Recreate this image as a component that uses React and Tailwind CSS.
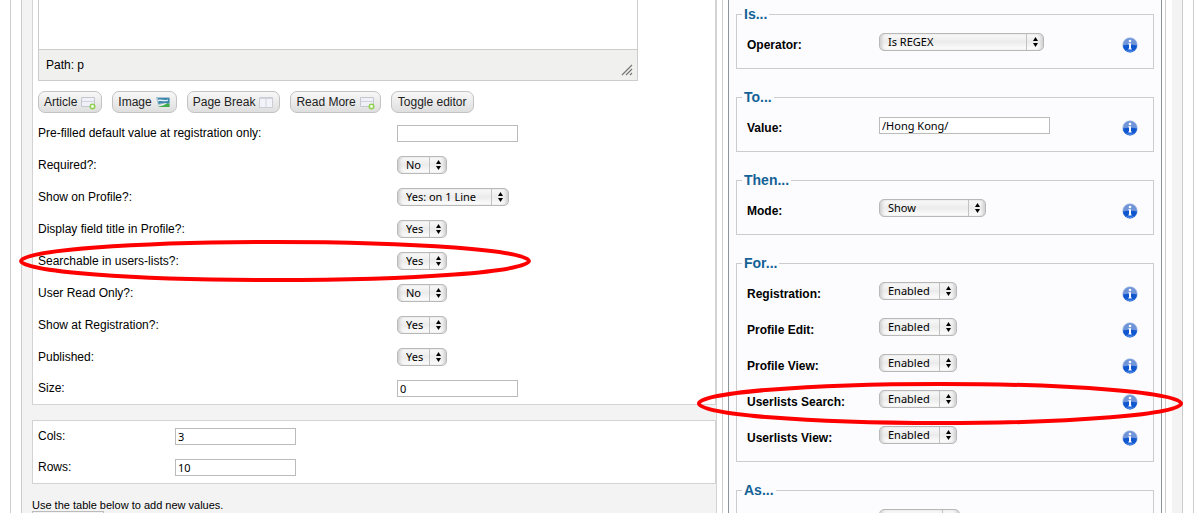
import { useId } from 'react';

const YES_NO = ['Yes', 'No'];
const STATES = ['Enabled', 'Disabled'];

function SelectBox({ id, value, options, width }) {
  return (
    <span className={`relative inline-flex ${width}`}>
      <select
        id={id}
        defaultValue={value}
        className="h-[18px] w-full appearance-none rounded-[5px] border border-[#b8b8b8] bg-linear-to-b from-[#fafafa] via-[#ebebeb] to-white pl-2 pr-[18px] font-['Noto_Sans',sans-serif] text-[11px] leading-4 text-black shadow-[inset_3px_0_3px_-1px_#d0d0d0,inset_-3px_0_3px_-1px_#d0d0d0]"
      >
        {options.map((option) => (
          <option key={option}>{option}</option>
        ))}
      </select>
      <span className="pointer-events-none absolute inset-y-px right-0 flex w-[18px] items-center justify-center border-l border-[#c2c2c2]">
        <svg width="5" height="10" viewBox="0 0 5 10" aria-hidden="true">
          <path d="M2.5 0 5 4H0zM2.5 10 0 6h5z" fill="#000" />
        </svg>
      </span>
    </span>
  );
}

function TextBox({ id, value = '', width }) {
  return (
    <input
      id={id}
      type="text"
      defaultValue={value}
      className={`h-[17px] border border-[#bbb] bg-white px-0.5 font-['Noto_Sans',sans-serif] text-[11px] leading-4 text-black ${width}`}
    />
  );
}

function Ring({ className }) {
  return (
    <svg className={`pointer-events-none absolute z-10 overflow-visible ${className}`} aria-hidden="true">
      <ellipse cx="50%" cy="50%" rx="49.6%" ry="45.5%" fill="none" stroke="#f00" strokeWidth="4" />
    </svg>
  );
}

function FieldRow({ label, value, options, width = 'w-[50px]', labelWidth = 'w-[359px]', ringed }) {
  const id = useId();
  return (
    <div className={`relative flex items-center ${options ? 'h-8' : 'h-[31px]'}`}>
      <label htmlFor={id} className={`shrink-0 text-xs ${options ? '' : 'pb-0.5'} ${labelWidth}`}>
        {label}
      </label>
      {options ? (
        <SelectBox id={id} value={value} options={options} width={width} />
      ) : (
        <TextBox id={id} value={value} width="w-[121px]" />
      )}
      {ringed && <Ring className="-left-[19px] -top-[5px] h-[42px] w-[512px]" />}
    </div>
  );
}

function InfoIcon() {
  return (
    <svg width="16" height="16" viewBox="0 0 16 16" aria-hidden="true">
      <circle cx="8" cy="8" r="7.3" fill="#6f95d8" stroke="#a9bfe6" strokeWidth=".6" />
      <path d="M1 8.4C4 7.4 12 7.4 15 8.4A7 7 0 0 1 1 8.4z" fill="#0f56cf" />
      <path d="M3 12.6a6.5 6.5 0 0 0 10 0c-3 1.6-7 1.6-10 0z" fill="#5b98f2" />
      <circle cx="8" cy="4" r="1.3" fill="#fff" />
      <path d="M6.4 6.3H9v5.3h.7v.9H6.4v-.9H7V7.2h-.6z" fill="#fff" />
    </svg>
  );
}

function ConditionRow({ label, value, options, width, ringed }) {
  const id = useId();
  return (
    <div className="relative flex h-9 items-center pl-[5px] pr-[10px] pt-2.5">
      <label htmlFor={id} className="w-[132px] shrink-0 text-xs font-bold">
        {label}
      </label>
      <div className="mb-1.5 flex flex-1">
        {options ? (
          <SelectBox id={id} value={value} options={options} width={width} />
        ) : (
          <TextBox id={id} value={value} width={width} />
        )}
      </div>
      <InfoIcon />
      {ringed && <Ring className="-left-[45px] top-[3px] h-[43px] w-[calc(100%+80px)]" />}
    </div>
  );
}

function ConditionGroup({ title, children }) {
  return (
    <fieldset className="mb-5 min-w-0 border border-[#ccc] px-[5px] pb-2.5">
      <legend className="px-0.5 text-sm leading-4 font-bold text-[#146295]">{title}</legend>
      {children}
    </fieldset>
  );
}

function PageGlyph({ type }) {
  return (
    <svg width="16" height="16" viewBox="0 0 16 16" aria-hidden="true">
      {type === 'image' && (
        <>
          <path d="M1 3h13.5v10H3.5z" fill="#a9c3d0" />
          <path d="M3 4h11.5v5c-4 2-7-1-11 1z" fill="#3c87ad" />
          <path d="M3 6c3-1.5 6 1 10-.5v1.2c-4 1.5-7-.7-10 .8z" fill="#e5f0f4" />
          <path d="M4 12.5c3-.5 6-3.5 10.5-3v3.5H4z" fill="#3fae49" />
          <path d="M3 11c3 0 6-2 9-2-2 2-5 3-8 3z" fill="#f2f5e8" />
        </>
      )}
      {type === 'columns' && (
        <>
          <path d="M1.5 3.5h13v10h-13z" fill="#f3f3fa" stroke="#ccccd6" />
          <path d="M8 3v11M2 4.5h12" stroke="#d2d2dc" />
        </>
      )}
      {type === 'add' && (
        <>
          <path d="M1.5 3.5h13v9h-13z" fill="#f0f0f8" stroke="#c6c6d0" />
          <path d="M2 7.5h12" stroke="#d2d2dc" />
          <circle cx="12.5" cy="12.5" r="2.2" fill="#fff" stroke="#8fd14f" strokeWidth="1.6" />
        </>
      )}
    </svg>
  );
}

function EditorButton({ label, icon }) {
  return (
    <button
      type="button"
      className={`flex h-[22px] items-center gap-[3px] rounded-[7px] border border-[#c2c2c2] bg-linear-to-b from-[#f8f8f8] to-[#dedede] text-xs text-[#222] ${icon ? 'px-[5px]' : 'px-1.5'}`}
    >
      {label}
      {icon && <PageGlyph type={icon} />}
    </button>
  );
}

function Editor() {
  return (
    <div className="w-[600px] max-w-full border border-t-0 border-[#ccc]">
      <div className="h-[49px] bg-white" />
      <div className="flex h-[31px] items-center justify-between border-t border-[#ccc] bg-[#f0f0ee] pl-[7px] pr-1">
        <span className="text-xs">Path: p</span>
        <svg width="12" height="12" viewBox="0 0 12 12" className="mt-2.5" aria-hidden="true">
          <path d="M1 11 11 1M5 11l6-6M9 11l2-2" stroke="#777" strokeWidth="1.2" />
        </svg>
      </div>
    </div>
  );
}

export default function App() {
  return (
    <main className="h-screen overflow-hidden bg-white px-2.5 font-['Liberation_Sans',Arial,sans-serif] text-black">
      <div className="border-x border-[#ccc] px-2.5">
        <div className="grid min-h-screen grid-cols-[139fr_93fr] border-x border-[#ccc]">
          <section className="border-r border-[#d3d3d3] bg-[#f3f3f3] pl-2.5">
            <div className="border border-t-0 border-[#d3d3d3] bg-white pl-[5px]">
              <Editor />
              <div className="mt-2.5 mb-[5px] flex gap-2.5">
                <EditorButton label="Article" icon="add" />
                <EditorButton label="Image" icon="image" />
                <EditorButton label="Page Break" icon="columns" />
                <EditorButton label="Read More" icon="add" />
                <EditorButton label="Toggle editor" />
              </div>
              <FieldRow label="Pre-filled default value at registration only:" />
              <FieldRow label="Required?:" value="No" options={YES_NO} />
              <FieldRow
                label="Show on Profile?:"
                value="Yes: on 1 Line"
                options={['Yes: on 1 Line', 'Yes: on 2 Lines', 'No']}
                width="w-28"
              />
              <FieldRow label="Display field title in Profile?:" value="Yes" options={YES_NO} />
              <FieldRow label="Searchable in users-lists?:" value="Yes" options={YES_NO} ringed />
              <FieldRow label="User Read Only?:" value="No" options={YES_NO} />
              <FieldRow label="Show at Registration?:" value="Yes" options={YES_NO} />
              <FieldRow label="Published:" value="Yes" options={YES_NO} />
              <FieldRow label="Size:" value="0" />
            </div>

            <div className="mt-[15px] border border-[#d3d3d3] bg-white pl-[5px]">
              <FieldRow label="Cols:" value="3" labelWidth="w-[137px]" />
              <FieldRow label="Rows:" value="10" labelWidth="w-[137px]" />
            </div>

            <p className="mt-[15px] text-[11px] leading-3">Use the table below to add new values.</p>
            <button
              type="button"
              aria-label="Add a value"
              className="block h-5 w-[72px] border border-[#bbb] bg-[#f3f3f3]"
            />
          </section>

          <section className="flex bg-white pl-[5px]">
            <div className="flex-1 border-x border-[#ccc] pl-[5px] pr-[3px]">
              <div className="h-full border-x border-[#8a9599] bg-[#fcfcff] px-[7px] pt-1.5">
                <ConditionGroup title="Is...">
                  <ConditionRow
                    label="Operator:"
                    value="Is REGEX"
                    options={['Is REGEX', 'Is Not REGEX']}
                    width="w-[165px]"
                  />
                </ConditionGroup>
                <ConditionGroup title="To...">
                  <ConditionRow label="Value:" value="/Hong Kong/" width="w-[171px]" />
                </ConditionGroup>
                <ConditionGroup title="Then...">
                  <ConditionRow
                    label="Mode:"
                    value="Show"
                    options={['Show', 'Hide']}
                    width="w-[107px]"
                  />
                </ConditionGroup>
                <ConditionGroup title="For...">
                  <ConditionRow label="Registration:" value="Enabled" options={STATES} width="w-[78px]" />
                  <ConditionRow label="Profile Edit:" value="Enabled" options={STATES} width="w-[78px]" />
                  <ConditionRow label="Profile View:" value="Enabled" options={STATES} width="w-[78px]" />
                  <ConditionRow label="Userlists Search:" value="Enabled" options={STATES} width="w-[78px]" ringed />
                  <ConditionRow label="Userlists View:" value="Enabled" options={STATES} width="w-[78px]" />
                </ConditionGroup>
                <ConditionGroup title="As...">
                  <ConditionRow label="" value="" options={['']} width="w-[81px]" />
                </ConditionGroup>
              </div>
            </div>
            <div className="ml-1.5 w-2.5 bg-[#f3f3f3]" />
          </section>
        </div>
      </div>
    </main>
  );
}
